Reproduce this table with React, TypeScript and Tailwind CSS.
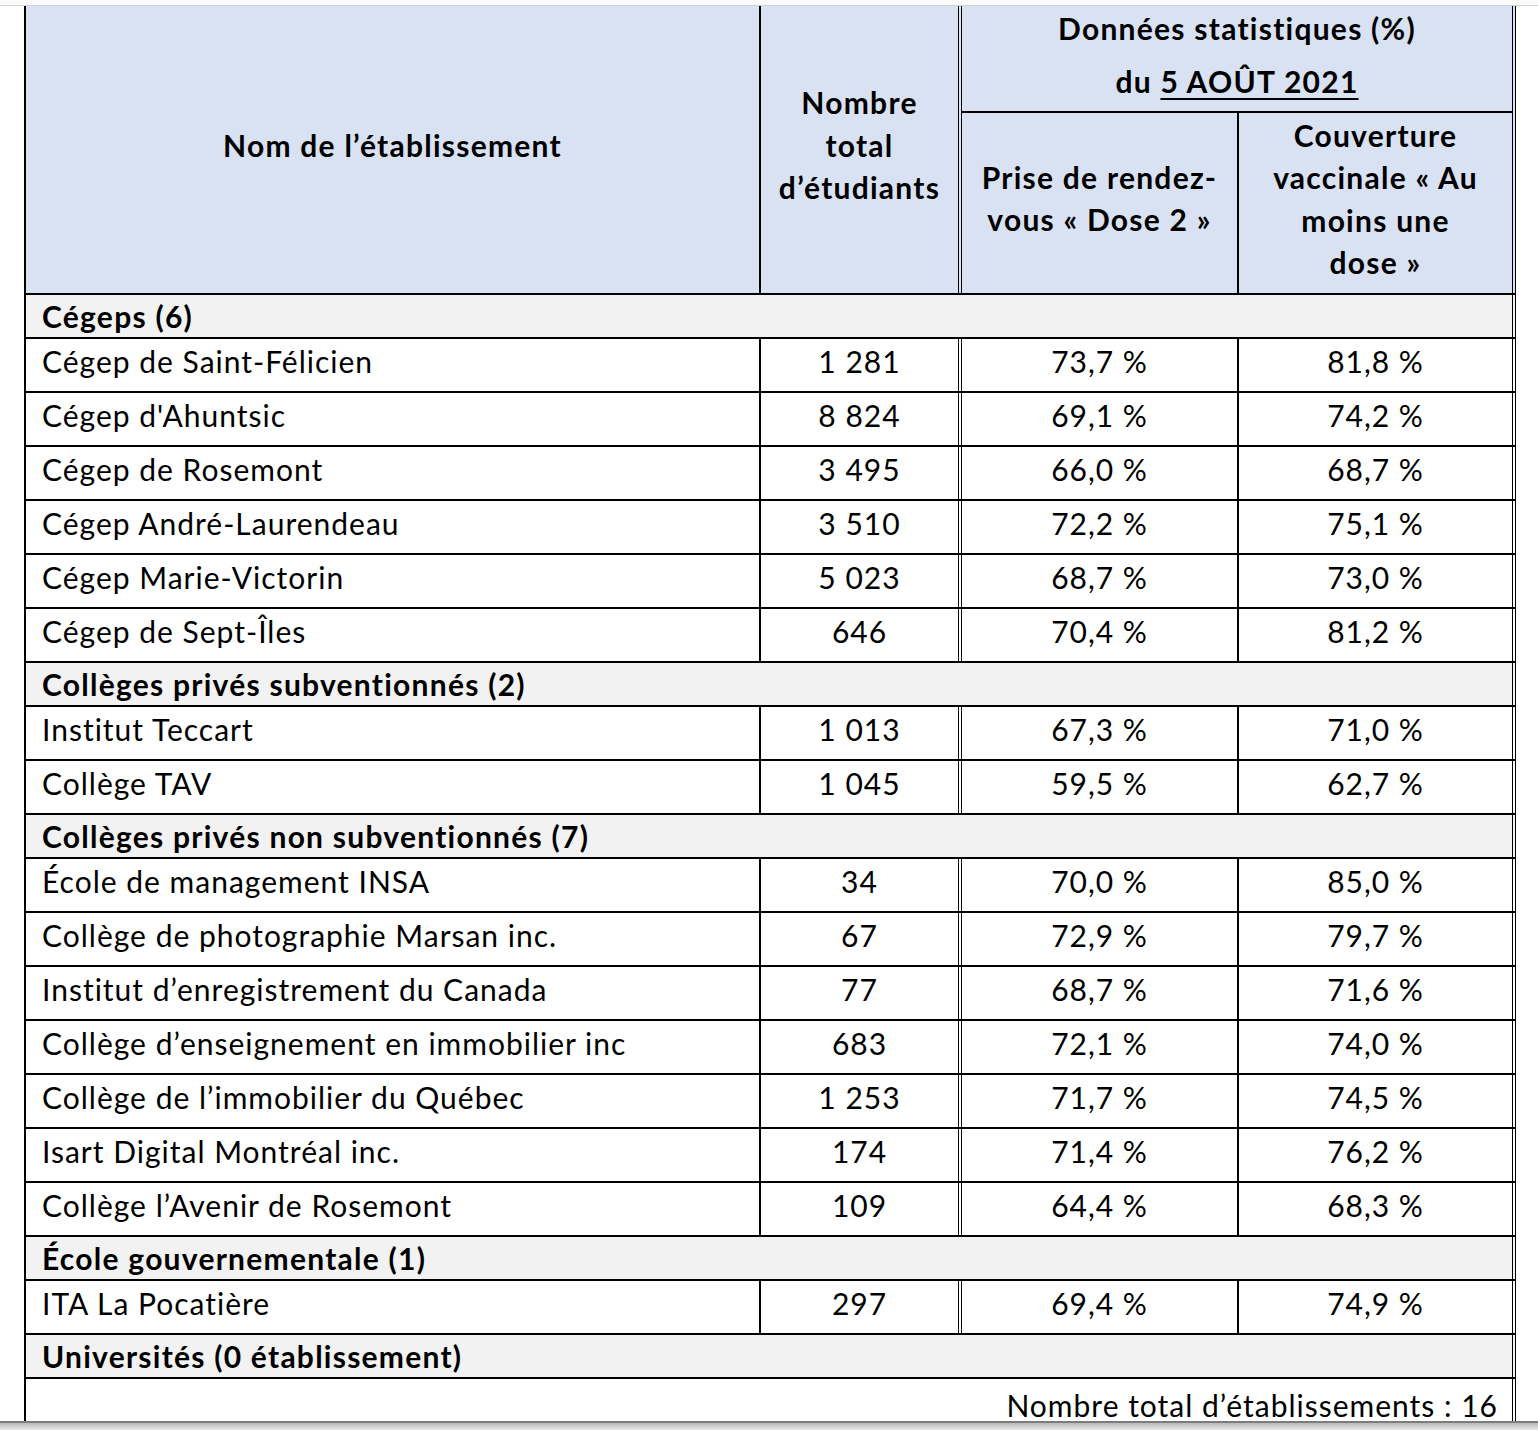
import React from 'react'

type Row = { name: string; total: string; dose2: string; cover: string }
type Group = { title: string; rows: Row[] }

const groups: Group[] = [
  {
    title: 'Cégeps (6)',
    rows: [
      { name: 'Cégep de Saint-Félicien', total: '1 281', dose2: '73,7 %', cover: '81,8 %' },
      { name: "Cégep d'Ahuntsic", total: '8 824', dose2: '69,1 %', cover: '74,2 %' },
      { name: 'Cégep de Rosemont', total: '3 495', dose2: '66,0 %', cover: '68,7 %' },
      { name: 'Cégep André-Laurendeau', total: '3 510', dose2: '72,2 %', cover: '75,1 %' },
      { name: 'Cégep Marie-Victorin', total: '5 023', dose2: '68,7 %', cover: '73,0 %' },
      { name: 'Cégep de Sept-Îles', total: '646', dose2: '70,4 %', cover: '81,2 %' },
    ],
  },
  {
    title: 'Collèges privés subventionnés (2)',
    rows: [
      { name: 'Institut Teccart', total: '1 013', dose2: '67,3 %', cover: '71,0 %' },
      { name: 'Collège TAV', total: '1 045', dose2: '59,5 %', cover: '62,7 %' },
    ],
  },
  {
    title: 'Collèges privés non subventionnés (7)',
    rows: [
      { name: 'École de management INSA', total: '34', dose2: '70,0 %', cover: '85,0 %' },
      { name: 'Collège de photographie Marsan inc.', total: '67', dose2: '72,9 %', cover: '79,7 %' },
      { name: 'Institut d’enregistrement du Canada', total: '77', dose2: '68,7 %', cover: '71,6 %' },
      { name: 'Collège d’enseignement en immobilier inc', total: '683', dose2: '72,1 %', cover: '74,0 %' },
      { name: 'Collège de l’immobilier du Québec', total: '1 253', dose2: '71,7 %', cover: '74,5 %' },
      { name: 'Isart Digital Montréal inc.', total: '174', dose2: '71,4 %', cover: '76,2 %' },
      { name: 'Collège l’Avenir de Rosemont', total: '109', dose2: '64,4 %', cover: '68,3 %' },
    ],
  },
  {
    title: 'École gouvernementale (1)',
    rows: [{ name: 'ITA La Pocatière', total: '297', dose2: '69,4 %', cover: '74,9 %' }],
  },
  { title: 'Universités (0 établissement)', rows: [] },
]

function GroupRow({ title }: { title: string }) {
  return (
    <div className="flex h-[44px] border-b-2 border-black">
      <div className="flex w-[1490px] items-center border-r-4 border-double border-black bg-[#f2f2f2] pl-[16px] font-bold tracking-[1.25px]">
        {title}
      </div>
    </div>
  )
}

function DataRow({ row }: { row: Row }) {
  return (
    <div className="flex h-[54px] border-b-2 border-black">
      <div className="flex w-[735px] items-center border-r-2 border-black pb-[8px] pl-[16px]">{row.name}</div>
      <div className="flex w-[201px] items-center justify-center border-r-4 border-double border-black pb-[8px]">{row.total}</div>
      <div className="flex w-[277px] items-center justify-center border-r-2 border-black pb-[8px]">{row.dose2}</div>
      <div className="flex w-[277px] items-center justify-center border-r-4 border-double border-black pb-[8px]">{row.cover}</div>
    </div>
  )
}

export default function App() {
  return (
    <div
      className="h-[1430px] w-[1538px] overflow-hidden bg-white text-[30px] leading-[1.2] tracking-[1px] text-black"
      style={{ fontFamily: 'Lato, "Open Sans", sans-serif' }}
    >
      <div className="h-[5px] bg-[#fbfbfb]" />
      <div className="h-px bg-[#d3d3d3]" />

      <div className="ml-[24px] w-[1492px] border-l-2 border-black">
        {/* header */}
        <div className="flex h-[289px] border-b-2 border-black bg-[#d9e2f3] font-bold leading-[42.5px] tracking-[1.25px]">
          <div className="flex w-[735px] items-center justify-center border-r-2 border-black pb-[9px]">
            Nom de l’établissement
          </div>
          <div className="flex w-[201px] flex-col items-center justify-center border-r-4 border-double border-black pb-[9px] text-center">
            <span>Nombre</span>
            <span>total</span>
            <span>d’étudiants</span>
          </div>
          <div className="flex w-[554px] flex-col border-r-4 border-double border-black">
            <div className="flex h-[107px] flex-col items-center justify-center border-b-2 border-black pb-[8px]">
              <span className="mb-[11px]">Données statistiques (%)</span>
              <span>
                du <span className="underline decoration-2 underline-offset-[5px]">5 AOÛT 2021</span>
              </span>
            </div>
            <div className="flex flex-1">
              <div className="flex w-[277px] flex-col items-center justify-center border-r-2 border-black pb-[10px] text-center">
                <span>Prise de rendez-</span>
                <span>vous « Dose 2 »</span>
              </div>
              <div className="flex flex-1 flex-col items-center justify-center pb-[9px] text-center">
                <span>Couverture</span>
                <span>vaccinale « Au</span>
                <span>moins une</span>
                <span>dose »</span>
              </div>
            </div>
          </div>
        </div>

        {groups.map(g => (
          <div key={g.title}>
            <GroupRow title={g.title} />
            {g.rows.map(r => (
              <DataRow key={r.name} row={r} />
            ))}
          </div>
        ))}

        <div className="flex h-[42px]">
          <div className="flex w-[1490px] justify-end border-r-4 border-double border-black pr-[14px] pt-[8px]">
            Nombre total d’établissements : 16
          </div>
        </div>
      </div>

      <div className="h-[2px] bg-[#7c7c7c]" />
      <div className="h-[7px] bg-gradient-to-b from-[#b9b9b9] to-[#e8e8e8]" />
    </div>
  )
}
